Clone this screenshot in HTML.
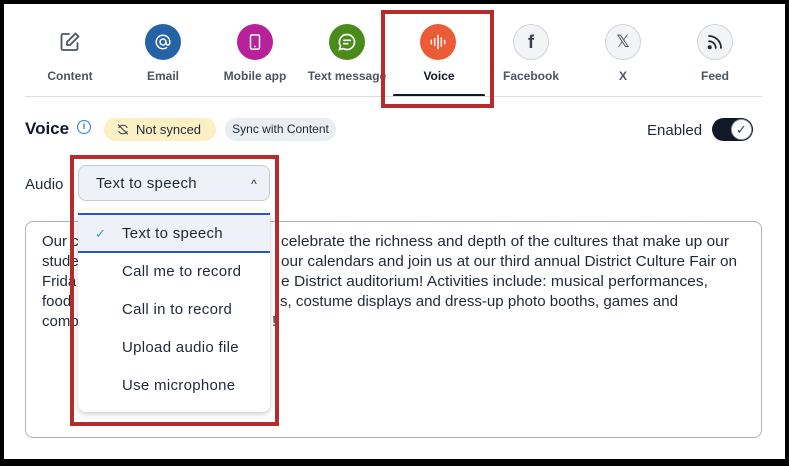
<!DOCTYPE html><html><head><style>
*{margin:0;padding:0;box-sizing:border-box}
body{width:789px;height:466px;background:#000;position:relative;overflow:hidden;font-family:"Liberation Sans",sans-serif;color:#1f2937}
.page{position:absolute;left:4px;top:4px;width:781px;height:455px;background:#fff}
.a{position:absolute}
.ic{position:absolute;width:36px;height:36px;border-radius:50%;top:24px;display:flex;align-items:center;justify-content:center}
.lb{position:absolute;top:69px;font-size:12px;color:#4b5563;font-weight:bold;width:100px;text-align:center}
.it{position:absolute;left:122px;font-size:15px;color:#1f2937;letter-spacing:0.3px}
</style></head><body><div class="page"></div>
<!-- tabs -->
<div class="ic" style="left:52px"><svg width="24" height="24" viewBox="0 0 24 24" fill="none" stroke="#4b5563" stroke-width="1.8" stroke-linecap="round" stroke-linejoin="round"><path d="M11 4H5a1.5 1.5 0 0 0-1.5 1.5v13A1.5 1.5 0 0 0 5 20h13a1.5 1.5 0 0 0 1.5-1.5V13"/><path d="M17.5 3.5l3 3L12 15H9v-3z"/></svg></div>
<div class="lb" style="left:20px">Content</div>
<div class="ic" style="left:145px;background:#2563a6"><svg width="18" height="18" viewBox="0 0 24 24" fill="none" stroke="#fff" stroke-width="2"><circle cx="12" cy="12" r="4"/><path d="M16 12v1.5a2.5 2.5 0 0 0 5 0V12a9 9 0 1 0-3.5 7.1"/></svg></div>
<div class="lb" style="left:113px">Email</div>
<div class="ic" style="left:237px;background:#b7219a"><svg width="18" height="20" viewBox="0 0 24 24" fill="none" stroke="#fff" stroke-width="2"><rect x="6" y="2.5" width="12" height="19" rx="2"/><path d="M11 18h2"/></svg></div>
<div class="lb" style="left:205px">Mobile app</div>
<div class="ic" style="left:329px;background:#4a8c1c"><svg width="20" height="20" viewBox="0 0 24 24" fill="none" stroke="#fff" stroke-width="2" stroke-linecap="round"><path d="M12 3a9 9 0 0 1 0 18c-1.7 0-3-.4-4.4-1.1L3 21l1.2-4.3A9 9 0 0 1 12 3z"/><path d="M8 10h8M8 14h5"/></svg></div>
<div class="lb" style="left:297px">Text message</div>
<div class="ic" style="left:420px;background:#ea5b36"><svg width="20" height="20" viewBox="0 0 24 24" stroke="#fff" stroke-width="1.8" stroke-linecap="round"><path d="M4 10v4M8 8v8M12 4v16M16 7v10M20 10v4"/></svg></div>
<div class="lb" style="left:389px;color:#111827">Voice</div>
<div class="a" style="left:393px;top:94px;width:92px;height:3px;background:#111827;border-radius:2px"></div>
<div class="ic" style="left:513px;background:#f3f4f6;border:1px solid #d1d5db"><span style="font-size:18px;font-weight:bold;color:#374151">f</span></div>
<div class="lb" style="left:481px">Facebook</div>
<div class="ic" style="left:605px;background:#f3f4f6;border:1px solid #d1d5db"><span style="font-size:17px;color:#374151">𝕏</span></div>
<div class="lb" style="left:573px">X</div>
<div class="ic" style="left:697px;background:#f3f4f6;border:1px solid #d1d5db"><svg width="18" height="18" viewBox="0 0 24 24" fill="none" stroke="#1f2937" stroke-width="2.4" stroke-linecap="round"><path d="M4 11a9 9 0 0 1 9 9M4 4a16 16 0 0 1 16 16"/><circle cx="5" cy="19" r="1.5" fill="#1f2937"/></svg></div>
<div class="lb" style="left:665px">Feed</div>
<div class="a" style="left:25px;top:96px;width:737px;height:1px;background:#d8dde6"></div>
<div class="a" style="left:381px;top:10px;width:113px;height:98px;border:4px solid #b62b2b"></div>
<!-- voice header -->
<div class="a" style="left:25px;top:119px;font-size:17px;font-weight:bold;color:#111827">Voice</div>
<div class="a" style="left:77px;top:120px;width:14px;height:14px;border:1.5px solid #2f7fd0;border-radius:50%;font-size:9px;color:#2f7fd0;text-align:center;line-height:11px;font-weight:bold">i</div>
<div class="a" style="left:104px;top:118px;width:112px;height:23px;background:#fbefc4;border-radius:11px;font-size:13px;line-height:23px;padding-left:32px;color:#1f2937">Not synced</div>
<svg class="a" style="left:116px;top:123px" width="14" height="13" viewBox="0 0 24 24" fill="none" stroke="#374151" stroke-width="2"><path d="M4 9a9 9 0 0 1 16 0M20 15a9 9 0 0 1-16 0M3 3l18 18"/></svg>
<div class="a" style="left:225px;top:118px;width:111px;height:23px;background:#eaedf1;border-radius:11px;font-size:12px;line-height:23px;text-align:center;color:#1f2937">Sync with Content</div>
<div class="a" style="left:647px;top:122px;font-size:15px;color:#1f2937">Enabled</div>
<div class="a" style="left:712px;top:118px;width:41px;height:23px;background:#111827;border-radius:12px"></div>
<div class="a" style="left:731px;top:119px;width:21px;height:21px;background:#fff;border-radius:50%;border:1px solid #9ca3af;text-align:center;line-height:20px;font-size:13px;color:#374151">✓</div>
<!-- audio -->
<div class="a" style="left:25px;top:176px;font-size:15px;color:#1f2937">Audio</div>
<div class="a" style="left:25px;top:221px;width:737px;height:217px;border:1px solid #aab3c2;border-radius:8px"></div>
<svg class="a" style="left:0;top:0" width="789" height="466" font-family="Liberation Sans, sans-serif" font-size="15" fill="#1f2937">
<text x="42" y="246">Our c</text>
<text x="42" y="266">stude</text>
<text x="42" y="286">Frida</text>
<text x="42" y="306">food</text>
<text x="42" y="326">comp</text>
<text x="281" y="246" textLength="448" lengthAdjust="spacingAndGlyphs">celebrate the richness and depth of the cultures that make up our</text>
<text x="281" y="266" textLength="456" lengthAdjust="spacingAndGlyphs">our calendars and join us at our third annual District Culture Fair on</text>
<text x="281" y="286" textLength="427" lengthAdjust="spacingAndGlyphs">e District auditorium! Activities include: musical performances,</text>
<text x="280" y="306" textLength="398" lengthAdjust="spacingAndGlyphs">s, costume displays and dress-up photo booths, games and</text>
<text x="272" y="326">!</text>
</svg>
<div class="a" style="left:78px;top:165px;width:192px;height:36px;background:#eef1f8;border:1px solid #c4cbd8;border-radius:8px;font-size:15px;line-height:36px;padding-left:17px;color:#1f2937;letter-spacing:0.3px">Text to speech<span style="position:absolute;right:12px;top:0;font-size:12px">^</span></div>
<div class="a" style="left:78px;top:210px;width:192px;height:202px;background:#fff;border-radius:8px;box-shadow:0 2px 6px rgba(0,0,0,.2)"></div>
<div class="a" style="left:78px;top:213px;width:192px;height:40px;background:#eef1f8;border-top:2px solid #2b55c4;border-bottom:2px solid #2b55c4"></div>
<div class="a" style="left:95px;top:226px;font-size:13px;color:#3b9bd8">✓</div>
<div class="it" style="top:225px">Text to speech</div>
<div class="it" style="top:263px">Call me to record</div>
<div class="it" style="top:301px">Call in to record</div>
<div class="it" style="top:339px">Upload audio file</div>
<div class="it" style="top:377px">Use microphone</div>
<div class="a" style="left:70px;top:155px;width:209px;height:271px;border:4px solid #b62b2b"></div>
</body></html>
